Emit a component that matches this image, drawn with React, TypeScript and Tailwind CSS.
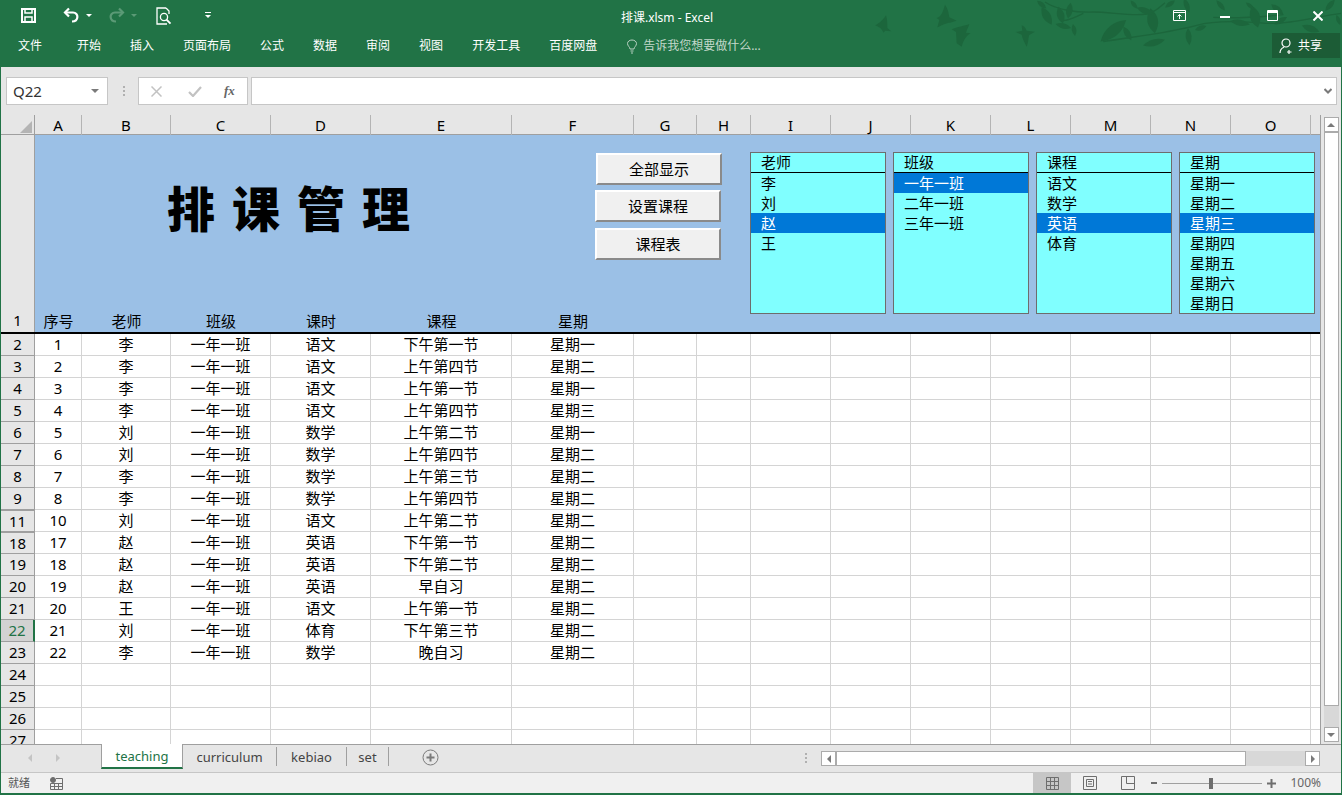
import React from 'react';

const gridCols =
  'grid grid-cols-[34px_47px_89px_100px_100px_141px_122px_63px_54px_80px_80px_80px_80px_80px_80px_80px_10px]';

const columns = ['A', 'B', 'C', 'D', 'E', 'F', 'G', 'H', 'I', 'J', 'K', 'L', 'M', 'N', 'O', ''];

const rows = [
  [2, '1', '李', '语文', '下午第一节', '星期一'],
  [3, '2', '李', '语文', '上午第四节', '星期二'],
  [4, '3', '李', '语文', '上午第一节', '星期一'],
  [5, '4', '李', '语文', '上午第四节', '星期三'],
  [6, '5', '刘', '数学', '上午第二节', '星期一'],
  [7, '6', '刘', '数学', '上午第四节', '星期二'],
  [8, '7', '李', '数学', '上午第三节', '星期二'],
  [9, '8', '李', '数学', '上午第四节', '星期二'],
  [11, '10', '刘', '语文', '上午第二节', '星期二'],
  [18, '17', '赵', '英语', '下午第一节', '星期二'],
  [19, '18', '赵', '英语', '下午第二节', '星期二'],
  [20, '19', '赵', '英语', '早自习', '星期二'],
  [21, '20', '王', '语文', '上午第一节', '星期二'],
  [22, '21', '刘', '体育', '下午第三节', '星期二'],
  [23, '22', '李', '数学', '晚自习', '星期二'],
];

const ribbonTabs = ['开始', '插入', '页面布局', '公式', '数据', '审阅', '视图', '开发工具', '百度网盘'];

// cx, cy, half length, half width, angle (in the 3x coordinates of the title art)
const leaves = [
  [590, 48, 30, 12, 60], [632, 45, 26, 11, 75], [658, 32, 24, 10, 100], [575, 14, 18, 7, 40],
  [640, 78, 24, 8, 15], [672, 90, 18, 7, 80], [790, 92, 50, 17, -40], [832, 100, 24, 9, 60],
  [908, 62, 38, 16, 80], [885, 32, 26, 9, 20], [852, 14, 16, 6, 50], [960, 12, 18, 7, -35],
  [912, 128, 34, 10, -15], [1016, 110, 26, 9, 85], [1052, 84, 18, 7, -20], [1010, 16, 22, 8, 70],
  [1215, 50, 34, 15, 75], [1170, 68, 30, 9, 10], [1112, 16, 20, 7, 50], [1200, 18, 16, 6, 40],
  [1282, 28, 24, 9, 40], [1292, 62, 22, 8, -30], [1382, 86, 28, 10, 20], [1440, 16, 22, 8, -50],
  [1465, 60, 16, 6, 70],
];

const TitleArt = () => (
  <svg className="absolute right-0 top-0" width="491" height="67" viewBox="0 0 1473 201" fill="#1c663c">
    <path d="M108 46C100 60 85 72 75 76C85 80 95 84 100 98L106 92L124 94L112 84C112 70 112 58 108 46Z" />
    <path d="M285 14C280 30 275 50 260 54L268 60L262 82C275 76 290 68 300 68L320 62L298 52C296 40 294 26 285 14Z" />
    <path d="M358 72C345 78 320 80 305 88L318 96L320 130L335 140C340 125 345 110 362 100L348 98C350 90 355 82 358 72Z" />
    <path d="M555 95L530 92C527 85 522 78 515 76L517 92L497 96L515 104C518 118 525 130 530 140C536 125 535 110 538 105Z" />
    <path
      d="M585 6C620 30 680 38 730 36C780 36 850 50 890 42C920 36 930 20 945 8M640 62C660 60 680 50 700 40M760 125C850 110 950 100 1040 76C1090 62 1180 64 1250 70C1320 74 1400 50 1473 40M1090 52C1160 56 1220 52 1300 44"
      fill="none"
      stroke="#1c663c"
      strokeWidth="4"
    />
    {leaves.map(([x, y, l, w, a], i) => (
      <path
        key={i}
        transform={`translate(${x} ${y}) rotate(${a})`}
        d={`M${-l} 0Q0 ${-w * 2} ${l} 0Q0 ${w * 2} ${-l} 0Z`}
      />
    ))}
  </svg>
);

const QuickAccess = () => (
  <div className="flex h-[33px] items-center relative">
    <svg className="absolute left-[20px] top-[8px]" width="15" height="15" viewBox="0 0 15 15" fill="none" stroke="#fff" strokeWidth="2">
      <path d="M1 1H14V14H1Z" />
      <path d="M4 1V5H11V1" strokeWidth="1.5" />
      <path d="M4 14V9H11V14" strokeWidth="1.5" />
    </svg>
    <svg className="absolute left-[62px] top-[7px]" width="17" height="17" viewBox="0 0 17 17" fill="none" stroke="#fff" strokeWidth="2.2">
      <path d="M6 1.5L2 5.5L6 9.5" />
      <path d="M2 5.5H10C16 5.5 16 14.5 9 14.5" />
    </svg>
    <div className="absolute left-[85px] top-[14px] border-x-[3px] border-t-[3px] border-x-transparent border-t-white" />
    <svg className="absolute left-[107px] top-[7px]" width="17" height="17" viewBox="0 0 17 17" fill="none" stroke="#5b9a76" strokeWidth="2.2">
      <path d="M11 1.5L15 5.5L11 9.5" />
      <path d="M15 5.5H7C1 5.5 1 14.5 8 14.5" />
    </svg>
    <div className="absolute left-[130px] top-[14px] border-x-[3px] border-t-[3px] border-x-transparent border-t-[#5b9a76]" />
    <svg className="absolute left-[155px] top-[7px]" width="16" height="18" viewBox="0 0 16 18" fill="none" stroke="#fff" strokeWidth="1.3">
      <path d="M10 1H1V17H11" />
      <path d="M10 1L13 4V7" />
      <circle cx="8" cy="10" r="3.6" />
      <path d="M10.5 12.6L14.5 16.6" strokeWidth="2" />
    </svg>
    <div className="absolute left-[204px] top-[12px] w-[6px] h-px bg-white" />
    <div className="absolute left-[204px] top-[15px] border-x-[3px] border-t-[3px] border-x-transparent border-t-white" />
    <div className="w-full pr-[8px] pt-[2px] text-center text-[12px] leading-[17px] text-white">排课.xlsm - Excel</div>
  </div>
);

const WindowButtons = () => (
  <div className="absolute top-0 right-0 h-[33px] w-[200px]">
    <svg className="absolute left-[32px] top-[10px]" width="13" height="11" viewBox="0 0 13 11" fill="none" stroke="#fff">
      <path d="M.5.5H12.5V10.5H.5ZM.5 2.5H12.5" />
      <path d="M6.5 9V4.5M4.5 6.5L6.5 4.5L8.5 6.5" />
    </svg>
    <div className="absolute left-[79px] top-[16px] w-[10px] h-[2px] bg-white" />
    <svg className="absolute left-[126px] top-[10px]" width="11" height="11" viewBox="0 0 11 11" fill="none" stroke="#fff">
      <path d="M.5.5H10.5V10.5H.5Z" />
      <path d="M0 2H11" strokeWidth="2" />
    </svg>
    <svg className="absolute left-[172px] top-[11px]" width="10" height="10" viewBox="0 0 10 10" stroke="#fff" strokeWidth="2">
      <path d="M.5.5L9.5 9.5M9.5.5L.5 9.5" />
    </svg>
  </div>
);

const RibbonTabs = () => (
  <div className="flex h-[34px] items-start text-[12px] leading-[26px] text-white relative">
    <div className="ml-[17px] mr-[35px]">文件</div>
    <div className="flex gap-[29px]">
      {ribbonTabs.map((t) => (
        <div key={t}>{t}</div>
      ))}
    </div>
    <svg className="ml-[29px] mt-[6px]" width="12" height="15" viewBox="0 0 12 15" fill="none" stroke="#b9d2c3">
      <path d="M4 10C4 8 1.5 7 1.5 4.5C1.5 2.5 3.5 1 6 1C8.5 1 10.5 2.5 10.5 4.5C10.5 7 8 8 8 10ZM4.5 12H7.5M5 14H7" />
    </svg>
    <div className="ml-[5px] text-[#c3d8cb]">告诉我您想要做什么...</div>
    <div className="absolute right-[1px] top-0 flex h-[25px] w-[68px] items-center bg-[#1c5c36]">
      <svg className="ml-[7px]" width="15" height="16" viewBox="0 0 15 16" fill="none" stroke="#fff" strokeWidth="1.2">
        <circle cx="7" cy="5" r="4" />
        <path d="M1 15C1 11.5 3 10 5 9.2M10 12V16M8 14H12.5" />
      </svg>
      <span className="ml-[4px] leading-[20px] text-white">共享</span>
    </div>
  </div>
);

const FormulaBar = () => (
  <div className="flex h-[48px] bg-[#e6e6e6] pt-[10px] pl-[5px]">
    <div className="flex h-[28px] w-[102px] items-center justify-between border border-[#c6c6c6] bg-white pl-[6px] pr-[8px] text-[15px] text-[#333]">
      <span>Q22</span>
      <div className="border-x-[4px] border-t-[4px] border-x-transparent border-t-[#7a7a7a]" />
    </div>
    <div className="ml-[15px] mr-[13px] mt-[9px] flex flex-col gap-[2px]">
      <div className="size-[2px] bg-[#b0b0b0]" />
      <div className="size-[2px] bg-[#b0b0b0]" />
      <div className="size-[2px] bg-[#b0b0b0]" />
    </div>
    <div className="flex h-[28px] w-[110px] items-center border border-[#c6c6c6] bg-white">
      <svg className="ml-[12px]" width="11" height="11" viewBox="0 0 11 11" stroke="#c2c2c2" strokeWidth="1.5">
        <path d="M.5.5L10.5 10.5M10.5.5L.5 10.5" />
      </svg>
      <svg className="ml-[26px]" width="14" height="11" viewBox="0 0 14 11" fill="none" stroke="#c2c2c2" strokeWidth="2.2">
        <path d="M1 6L5 10L13 1" />
      </svg>
      <span className="ml-[22px] font-['Liberation_Serif',serif] text-[13px] font-bold italic text-[#666]">fx</span>
    </div>
    <div className="ml-[3px] flex h-[28px] w-[1086px] items-center justify-end border border-[#c6c6c6] bg-white pr-[4px]">
      <svg width="8" height="6" viewBox="0 0 8 6" fill="none" stroke="#7a7a7a" strokeWidth="2">
        <path d="M.5 1L4 4.5L7.5 1" />
      </svg>
    </div>
  </div>
);

const ListBox = ({ title, items, active, left }: { title: string; items: string[]; active: number; left: string }) => (
  <div className={`absolute top-[17px] h-[162px] w-[136px] border border-[#6d6d6d] bg-[#80ffff] text-[15px] leading-[20px] text-black ${left}`}>
    <div className="h-[20px] border-b border-black pl-[10px] leading-[19px]">{title}</div>
    {items.map((item, i) => (
      <div key={item} className={i === active ? 'h-[20px] bg-[#0078d7] pl-[10px] text-white' : 'h-[20px] pl-[10px]'}>
        {item}
      </div>
    ))}
  </div>
);

const ShapeButton = ({ label, pos }: { label: string; pos: string }) => (
  <div
    className={`absolute flex h-[32px] w-[126px] items-center justify-center border-2 border-t-white border-l-white border-r-[#8a8a8a] border-b-[#8a8a8a] bg-[#f0f0f0] text-[15px] text-black ${pos}`}
  >
    {label}
  </div>
);

const Banner = () => (
  <div className={`${gridCols} h-[199px] border-b-2 border-black`}>
    <div className="row-span-1 flex items-end justify-center border-r border-[#9f9f9f] bg-[#e6e6e6] text-[15px] leading-[22px]">
      <span className="mb-px">1</span>
    </div>
    <div className="relative col-span-16 bg-[#9bc0e6]">
      <div className="absolute left-[132px] top-[43px] whitespace-nowrap text-[48px] font-black leading-[62px] tracking-[17px] text-black">
        排课管理
      </div>
      <ShapeButton label="全部显示" pos="left-[561px] top-[18px]" />
      <ShapeButton label="设置课程" pos="left-[560px] top-[55px]" />
      <ShapeButton label="课程表" pos="left-[560px] top-[93px]" />
      <ListBox left="left-[715px]" title="老师" items={['李', '刘', '赵', '王']} active={2} />
      <ListBox left="left-[858px]" title="班级" items={['一年一班', '二年一班', '三年一班']} active={0} />
      <ListBox left="left-[1001px]" title="课程" items={['语文', '数学', '英语', '体育']} active={2} />
      <ListBox
        left="left-[1144px]"
        title="星期"
        items={['星期一', '星期二', '星期三', '星期四', '星期五', '星期六', '星期日']}
        active={2}
      />
      <div className="absolute inset-x-0 bottom-0 flex h-[22px] text-[15px] leading-[22px] text-black">
        <div className="w-[47px] text-center">序号</div>
        <div className="w-[89px] text-center">老师</div>
        <div className="w-[100px] text-center">班级</div>
        <div className="w-[100px] text-center">课时</div>
        <div className="w-[141px] text-center">课程</div>
        <div className="w-[122px] text-center">星期</div>
      </div>
    </div>
  </div>
);

const Cell = ({ children }: { children?: React.ReactNode }) => (
  <div className="h-[22px] border-r border-b border-[#d4d4d4] bg-white text-center">{children}</div>
);

const RowHead = ({ n }: { n: number }) => {
  const selected = n === 22;
  const afterHidden = n === 11 || n === 18;
  return (
    <div
      className={`h-[22px] border-b border-[#9f9f9f] text-center ${
        selected ? 'border-r-2 border-r-[#217346] bg-[#d2d2d2] text-[#217346]' : 'border-r border-r-[#9f9f9f] bg-[#e6e6e6]'
      } ${afterHidden ? 'border-t border-t-[#9f9f9f] leading-[20px]' : ''}`}
    >
      {n}
    </div>
  );
};

const Sheet = () => {
  const emptyCols = Array.from({ length: 10 }, (_, i) => i);
  return (
    <div className="h-full w-[1320px] shrink-0 overflow-hidden border-r border-[#9f9f9f] text-[15px] leading-[21px] text-black">
      <div className={`${gridCols} h-[20px] border-b border-[#9f9f9f] bg-[#e6e6e6]`}>
        <div className="relative border-r border-[#9f9f9f]">
          <div className="absolute bottom-[2px] right-[2px] size-0 border-b-[12px] border-l-[12px] border-b-[#b4b4b4] border-l-transparent" />
        </div>
        {columns.map((c, i) => (
          <div key={i} className="border-r border-[#b4b4b4] text-center leading-[20px]">
            {c}
          </div>
        ))}
      </div>
      <Banner />
      {rows.map((r) => (
        <div key={r[0]} className={gridCols}>
          <RowHead n={r[0] as number} />
          <Cell>{r[1]}</Cell>
          <Cell>{r[2]}</Cell>
          <Cell>一年一班</Cell>
          <Cell>{r[3]}</Cell>
          <Cell>{r[4]}</Cell>
          <Cell>{r[5]}</Cell>
          {emptyCols.map((i) => (
            <Cell key={i} />
          ))}
        </div>
      ))}
      {[24, 25, 26, 27].map((n) => (
        <div key={n} className={gridCols}>
          <RowHead n={n} />
          {Array.from({ length: 16 }, (_, i) => (
            <Cell key={i} />
          ))}
        </div>
      ))}
    </div>
  );
};

const VScroll = () => (
  <div className="flex flex-1 flex-col items-center bg-[#e6e6e6] pt-[2px] pb-[2px]">
    <div className="flex h-[15px] w-[15px] items-center justify-center border border-[#ababab] bg-white">
      <div className="border-x-[4px] border-b-[4px] border-x-transparent border-b-[#7a7a7a]" />
    </div>
    <div className="h-[574px] w-[15px] border border-[#ababab] bg-white" />
    <div className="w-[15px] flex-1 bg-[#d8d8d8]" />
    <div className="flex h-[15px] w-[15px] items-center justify-center border border-[#ababab] bg-white">
      <div className="border-x-[4px] border-t-[4px] border-x-transparent border-t-[#7a7a7a]" />
    </div>
  </div>
);

const TabStrip = () => (
  <div className="relative flex h-[29px] border-t border-b border-t-[#9f9f9f] border-b-[#c6c6c6] bg-[#e6e6e6] text-[13px] leading-[24px] text-[#444]">
    <div className="flex w-[100px] items-start pl-[27px] pt-[9px]">
      <div className="border-y-[4px] border-r-[4px] border-y-transparent border-r-[#c4c4c4]" />
      <div className="ml-[24px] border-y-[4px] border-l-[4px] border-y-transparent border-l-[#c4c4c4]" />
    </div>
    <div className="-mt-px h-[25px] w-[82px] border-x border-[#9f9f9f] border-b-2 border-b-[#217346] bg-white text-center text-[#217346]">
      teaching
    </div>
    <div className="mt-[2px] flex h-[19px] w-[94px] items-center justify-center border-r border-[#9f9f9f]">curriculum</div>
    <div className="mt-[2px] flex h-[19px] w-[70px] items-center justify-center border-r border-[#9f9f9f]">kebiao</div>
    <div className="mt-[2px] flex h-[19px] w-[42px] items-center justify-center border-r border-[#9f9f9f]">set</div>
    <svg className="ml-[33px] mt-[4px]" width="17" height="17" viewBox="0 0 17 17" fill="none" stroke="#7a7a7a">
      <circle cx="8.5" cy="8.5" r="7.5" />
      <path d="M8.5 4.5V12.5M4.5 8.5H12.5" strokeWidth="2" />
    </svg>
    <div className="ml-auto mr-[21px] flex items-start">
      <div className="mr-[14px] mt-[8px] flex flex-col gap-[2px]">
        <div className="size-[2px] bg-[#b0b0b0]" />
        <div className="size-[2px] bg-[#b0b0b0]" />
        <div className="size-[2px] bg-[#b0b0b0]" />
      </div>
      <div className="mt-[6px] flex h-[15px]">
        <div className="flex w-[15px] items-center justify-center border border-[#ababab] bg-white">
          <div className="border-y-[4px] border-r-[4px] border-y-transparent border-r-[#7a7a7a]" />
        </div>
        <div className="w-[410px] border border-[#ababab] bg-white" />
        <div className="w-[59px] bg-[#d8d8d8]" />
        <div className="flex w-[15px] items-center justify-center border border-[#ababab] bg-white">
          <div className="border-y-[4px] border-l-[4px] border-y-transparent border-l-[#7a7a7a]" />
        </div>
      </div>
    </div>
  </div>
);

const StatusBar = () => (
  <div className="flex h-[20px] items-center bg-[#f0f0f0] text-[11px] text-[#555]">
    <span className="ml-[7px]">就绪</span>
    <svg className="ml-[20px]" width="13" height="13" viewBox="0 0 13 13" fill="none" stroke="#6e6e6e">
      <circle cx="3" cy="3" r="2.5" fill="#6e6e6e" />
      <path d="M6 1.5H12.5V12.5H.5V6.5H12.5M4.5 6.5V12.5M8.5 6.5V12.5M.5 9.5H12.5" />
    </svg>
    <div className="ml-auto flex h-full items-center">
      <div className="flex h-full w-[38px] items-center justify-center bg-[#c6c6c6]">
        <svg width="13" height="13" viewBox="0 0 13 13" fill="none" stroke="#6e6e6e">
          <path d="M.5.5H12.5V12.5H.5ZM4.5.5V12.5M8.5.5V12.5M.5 4.5H12.5M.5 8.5H12.5" />
        </svg>
      </div>
      <div className="flex w-[38px] justify-center">
        <svg width="14" height="14" viewBox="0 0 14 14" fill="none" stroke="#6e6e6e">
          <path d="M.5.5H13.5V13.5H.5ZM3.5 3.5H10.5V10.5H3.5ZM5 5.5H9M5 8H9" />
        </svg>
      </div>
      <div className="flex w-[38px] justify-center">
        <svg width="14" height="14" viewBox="0 0 14 14" fill="none" stroke="#6e6e6e">
          <path d="M.5.5H13.5V13.5H.5ZM5.5.5V7.5H13.5" />
        </svg>
      </div>
      <div className="ml-[4px] h-[2px] w-[6px] bg-[#6e6e6e]" />
      <div className="relative mx-[5px] h-px w-[100px] bg-[#a0a0a0]">
        <div className="absolute left-[47px] top-[-5px] h-[11px] w-[4px] bg-[#6e6e6e]" />
      </div>
      <svg width="9" height="9" viewBox="0 0 9 9" stroke="#6e6e6e" strokeWidth="2">
        <path d="M4.5 0V9M0 4.5H9" />
      </svg>
      <span className="ml-[14px] mr-[20px] text-[12px] text-[#666]">100%</span>
    </div>
  </div>
);

const App = () => (
  <div className="flex h-[795px] w-[1342px] flex-col overflow-hidden border-x border-b-2 border-[#217346] bg-[#e6e6e6] font-['Noto_Sans','Noto_Sans_CJK_SC',sans-serif]">
    <div className="relative h-[67px] shrink-0 bg-[#217346]">
      <TitleArt />
      <QuickAccess />
      <WindowButtons />
      <RibbonTabs />
    </div>
    <FormulaBar />
    <div className="flex h-[629px] shrink-0">
      <Sheet />
      <VScroll />
    </div>
    <TabStrip />
    <StatusBar />
  </div>
);

export default App;
